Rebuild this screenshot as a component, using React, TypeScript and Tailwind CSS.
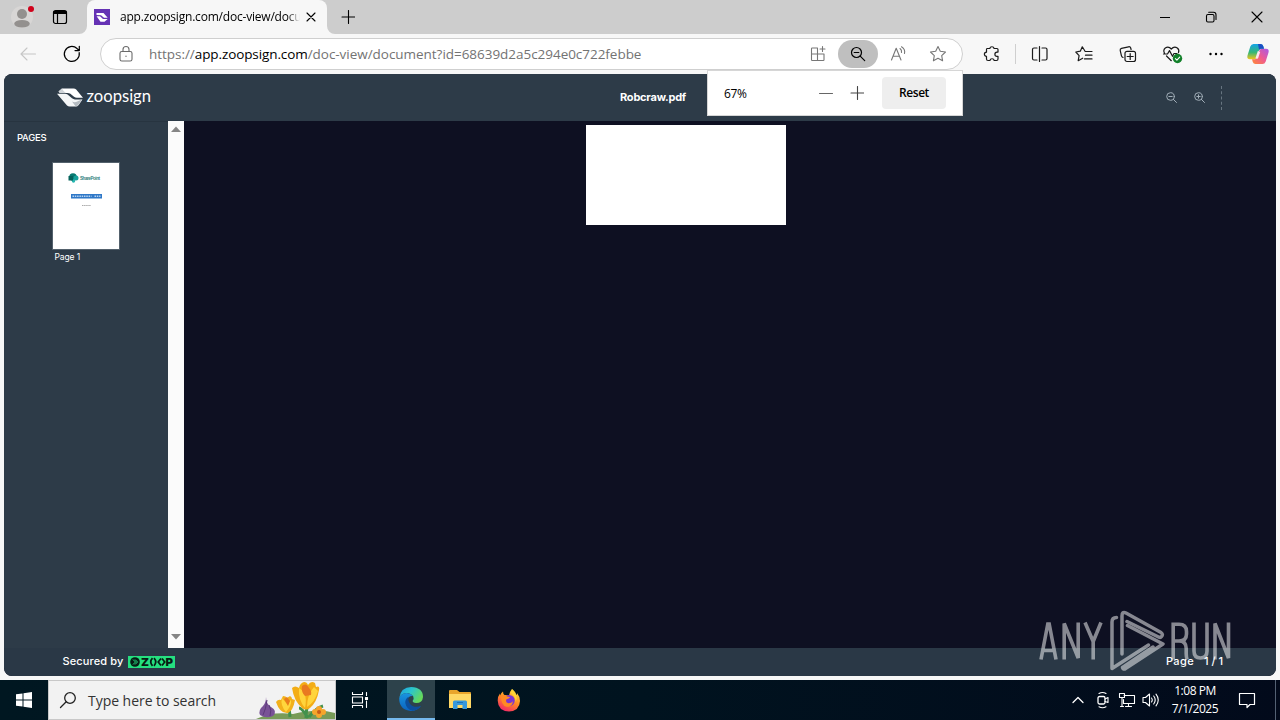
import type { ReactNode } from "react";

interface IconProps {
  w?: number;
  h?: number;
  className?: string;
  children: ReactNode;
}

function Icon({ w = 20, h = 20, className = "", children }: IconProps) {
  return (
    <svg
      width={w}
      height={h}
      viewBox={`0 0 ${w} ${h}`}
      fill="none"
      stroke="currentColor"
      strokeWidth="1.1"
      strokeLinecap="round"
      strokeLinejoin="round"
      className={`shrink-0 ${className}`}
    >
      {children}
    </svg>
  );
}

function ToolButton({ children, className = "w-11" }: { children: ReactNode; className?: string }) {
  return (
    <button className={`flex h-8 shrink-0 items-center justify-center ${className}`}>
      {children}
    </button>
  );
}

function TabStrip() {
  return (
    <div className="flex h-[34px] bg-[#cdcdcd]">
      <div className="flex w-[87px] shrink-0 items-center">
        <Icon w={28} h={28} className="ml-2">
          <circle cx="14" cy="14" r="11" fill="#d8d6d5" stroke="none" />
          <circle cx="14" cy="11" r="5" fill="#93908e" stroke="none" />
          <ellipse cx="14" cy="20.8" rx="7.8" ry="3.8" fill="#93908e" stroke="none" />
          <circle cx="23" cy="6" r="3" fill="#d0021b" stroke="none" />
        </Icon>
        <Icon className="ml-[14px] text-black">
          <rect x="3.5" y="3.5" width="13" height="13" rx="2" strokeWidth="1.2" />
          <path d="M4 4.5h12v1.8H4zM7.5 7v9" strokeWidth="1.2" fill="currentColor" />
        </Icon>
      </div>
      <div className="relative flex w-60 shrink-0 items-center rounded-t-lg bg-[#f7f7f7]">
        <svg className="absolute bottom-0 -left-2" width="8" height="8">
          <path d="M8 0v8H0a8 8 0 0 0 8-8" fill="#f7f7f7" />
        </svg>
        <svg className="absolute -right-2 bottom-0" width="8" height="8">
          <path d="M0 0v8h8a8 8 0 0 1-8-8" fill="#f7f7f7" />
        </svg>
        <Icon w={16} h={16} className="ml-[7px]">
          <rect width="16" height="16" fill="#6532b4" stroke="none" />
          <path d="M2.5 4h7l4.2 4.700H10L7 6.300 2.500 6z" fill="#fff" stroke="none" />
          <path d="M2.600 7.300H6l3 2.600h4.700L10.500 12.700H6.500z" fill="#fff" stroke="none" />
        </Icon>
        <span className="ml-[10px] w-[180px] bg-gradient-to-r from-black from-93% to-transparent bg-clip-text font-['Open_Sans',sans-serif] text-[12px] tracking-[-0.2px] whitespace-nowrap text-transparent">
          app.zoopsign.com/doc-view/docu
        </span>
        <Icon w={10} h={10} className="ml-[6px] text-black">
          <path d="M1 1l8 8M9 1L1 9" />
        </Icon>
      </div>
      <Icon w={14} h={14} className="mt-[10px] ml-[14px] text-black">
        <path d="M7.500.5v13M1 7h13" />
      </Icon>
      <div className="ml-auto flex">
        <div className="flex w-[46px] items-center justify-center">
          <Icon w={10} h={10} className="text-black">
            <path d="M0 5.5h10" />
          </Icon>
        </div>
        <div className="flex w-[46px] items-center justify-center">
          <Icon w={12} h={12} className="text-black">
            <rect x="1.500" y="3.500" width="7.500" height="7.500" rx="1.400" />
            <path d="M3.700 1.300h4.800a2.500 2.500 0 0 1 2.500 2.500v4.700" />
          </Icon>
        </div>
        <div className="flex w-[46px] items-center justify-center">
          <Icon w={12} h={12} className="text-black">
            <path d="M1 1l10 10M11 1L1 11" />
          </Icon>
        </div>
      </div>
    </div>
  );
}

function AddressBar() {
  return (
    <div className="ml-[6px] flex h-8 w-[863px] shrink-0 items-center rounded-full border border-[#cfcfcf] bg-white">
      <Icon className="ml-[15px] text-[#6b6b6b]">
        <rect x="4" y="7.5" width="12" height="9.5" rx="1.8" />
        <path d="M7 7.5V5.5a3 3 0 0 1 6 0v2" />
        <circle cx="10" cy="12.2" r=".7" fill="currentColor" stroke="none" />
      </Icon>
      <span className="ml-[13px] font-['Open_Sans',sans-serif] text-[13.5px] tracking-[-0.035px] whitespace-nowrap text-[#737373]">
        https://<span className="tracking-[-0.1px] text-black">app.zoopsign.com</span>
        /doc-view/document?id=68639d2a5c294e0c722febbe
      </span>
      <div className="mr-[4px] ml-auto flex items-center">
        <ToolButton className="w-10">
          <Icon className="text-[#777]">
            <path d="M9.500 4H4.200Q3.500 4 3.500 4.700V15.800q0 .7.7.7H15.300q.7 0 .7-.7V10H3.500M9.500 4v12.500M14.500 2.500v5M12 5h5" />
          </Icon>
        </ToolButton>
        <button className="flex h-7 w-10 items-center justify-center rounded-full bg-[#bfbfbf]">
          <Icon className="text-black">
            <circle cx="8.500" cy="8.500" r="5" strokeWidth="1.200" />
            <path d="M6.200 8.500h4.600M12.200 12.200l4.500 4.500" strokeWidth="1.200" />
          </Icon>
        </button>
        <ToolButton className="w-10">
          <Icon className="text-[#777]">
            <path d="M3.500 16L8.200 4.300 13 16M5 12.300h6.400M12 4.500q2 1.500 1.500 4M13.500 2.800q4 2.400 3 6.700" />
          </Icon>
        </ToolButton>
        <ToolButton className="w-10">
          <Icon className="text-[#777]">
            <path d="M10 2.500l2.300 4.800 5.200.7-3.800 3.600.9 5.200-4.600-2.500-4.600 2.500.9-5.200L2.500 8l5.200-.7z" />
          </Icon>
        </ToolButton>
      </div>
    </div>
  );
}

function Copilot() {
  return (
    <svg width="24" height="22" viewBox="0 0 24 22" className="shrink-0">
      <defs>
        <linearGradient id="cpA" x1="0" y1="0" x2="0" y2="1">
          <stop offset="0" stopColor="#14a4e8" />
          <stop offset=".55" stopColor="#35b777" />
          <stop offset="1" stopColor="#f3c51b" />
        </linearGradient>
        <linearGradient id="cpB" x1="1" y1="0" x2="0" y2="1">
          <stop offset="0" stopColor="#a859e8" />
          <stop offset=".5" stopColor="#ef5a91" />
          <stop offset="1" stopColor="#ff8a32" />
        </linearGradient>
      </defs>
      <path d="M7.5 1h7q2 0 2.7 2l.8 2.8h-3q-1.6 0-2.2 2l-2 6.5q-.7 2-2.8 2H4Q.5 16.300 1.500 12.500L4.300 3.500Q5.200 1 7.500 1z" fill="url(#cpA)" />
      <path d="M16.500 21h-7q-2 0-2.700-2L6 16.300h3q1.700 0 2.300-2l2-6.500q.6-2 2.700-2H20q3.500 0 2.500 3.800l-2.800 8.900q-.9 2.500-3.200 2.500z" fill="url(#cpB)" />
      <path d="M12 1h2.500q2 0 2.700 2l.8 2.800h-3q-1.200 0-1.900 1.200z" fill="#1b4fc4" />
      <path d="M13 8.500l-2.300 6.800" stroke="#fbe7ef" strokeWidth="2.500" />
    </svg>
  );
}

function Toolbar() {
  return (
    <div className="flex h-10 items-center bg-[#f7f7f7] text-[#1a1a1a]">
      <ToolButton className="ml-[6px] w-11 text-[#c6c6c6]">
        <Icon>
          <path d="M17.500 10H3M9 4l-6 6 6 6" />
        </Icon>
      </ToolButton>
      <ToolButton>
        <Icon className="text-black">
          <path d="M17.200 8.600A7.500 7.500 0 1 1 15 4.500L17.300 6.600M17.300 2.300v4.300H13" strokeWidth="1.200" />
        </Icon>
      </ToolButton>
      <AddressBar />
      <ToolButton className="ml-[7px] w-11">
        <Icon>
          <path
            d="M5 4.500h2.800a2.200 2.200 0 0 1 4.300 0H15q1 0 1 1v2.600h-1a2.100 2.100 0 0 0 0 4.200h1V15q0 1.500-1.500 1.500h-2.300a2.200 2.200 0 0 0-4.300 0H6q-1.500 0-1.500-1.500v-2.600a2.100 2.100 0 0 1 0-4.200V5.500q0-1 .5-1z"
            strokeWidth="1.200"
          />
        </Icon>
      </ToolButton>
      <div className="mr-[2px] ml-[1px] h-5 w-px bg-[#cfcfcf]" />
      <ToolButton>
        <Icon>
          <path d="M7 4H4Q2.500 4 2.500 5.500v9Q2.500 16 4 16h3M12 4h3.500Q17 4 17 5.500v9q0 1.500-1.500 1.500H12M9.500 2.500v15" strokeWidth="1.200" />
        </Icon>
      </ToolButton>
      <ToolButton>
        <Icon>
          <path d="M12.200 7.500h-1L8.300 2.800 6.300 7.200 1.800 8l3.300 3.600-.9 5.100 4.500-2.500M12.200 7.500H18M11.500 11.200H18M10.500 14.900H18" strokeWidth="1.200" />
        </Icon>
      </ToolButton>
      <ToolButton>
        <Icon>
          <path d="M5 13.500q-1.200-.4-1.600-1.900L2.200 6.300q-.3-1.600 1.300-2l7-1.500q1.700-.4 2.200 1.200l.4 1.500" strokeWidth="1.200" />
          <rect x="7" y="7.300" width="10.500" height="10.200" rx="2" strokeWidth="1.200" />
          <path d="M12.200 9.500v6M9.200 12.500h6" strokeWidth="1.200" />
        </Icon>
      </ToolButton>
      <ToolButton>
        <Icon w={22} h={20}>
          <path d="M3.500 9.300Q1.800 5.800 4.300 3.900 7.700 1.900 10.300 5 13 1.900 16.300 3.900 18.600 5.600 17.500 8.600M5.500 12l4.800 4.700M2.500 10h4L8.500 6.600l3 5.700L13 9.500h3" strokeWidth="1.200" />
          <circle cx="16.500" cy="14.500" r="4.700" fill="#12802a" stroke="none" />
          <path d="M14.400 14.700l1.500 1.500 2.800-3" stroke="#fff" />
        </Icon>
      </ToolButton>
      <ToolButton>
        <Icon>
          <g fill="black" stroke="none">
            <circle cx="4.500" cy="10" r="1.200" />
            <circle cx="10" cy="10" r="1.200" />
            <circle cx="15.500" cy="10" r="1.200" />
          </g>
        </Icon>
      </ToolButton>
      <ToolButton className="w-10">
        <Copilot />
      </ToolButton>
    </div>
  );
}

function ZoomPopover() {
  return (
    <div className="absolute top-[70px] left-[707px] flex h-[46px] w-64 items-center border border-[#d6d6d6] bg-white font-['Open_Sans',sans-serif] text-[12px] text-black">
      <span className="mt-px ml-4 w-[95px] tracking-[-0.4px]">67%</span>
      <Icon w={14} h={14} className="text-[#666]">
        <path d="M.5 7.500h13" />
      </Icon>
      <Icon w={14} h={14} className="ml-[17px] text-[#444]">
        <path d="M1 7h13M7.500.5v13" />
      </Icon>
      <button className="ml-[18px] h-8 w-16 rounded-sm bg-[#eee] font-semibold tracking-[-0.45px]">
        Reset
      </button>
    </div>
  );
}

function PageThumbnail() {
  return (
    <svg width="66" height="86" viewBox="0 0 66 86" className="bg-white">
      <circle cx="20" cy="14" r="3.800" fill="#087a72" />
      <circle cx="23" cy="15" r="2.500" fill="#18a19c" />
      <circle cx="20.500" cy="18" r="1.700" fill="#27b6b0" />
      <rect x="15.500" y="13" width="4.500" height="4.500" fill="#05635c" />
      <text x="27" y="17" fontSize="4.500" fontWeight="700" fill="#33817f" textLength="20" fontFamily="Liberation Sans, sans-serif">
        SharePoint
      </text>
      <rect x="18" y="31" width="31" height="4.500" fill="#2f78c8" />
      <path d="M19.500 33.300h19M41.500 33.300h6" stroke="#b9d4f0" strokeWidth="1.400" strokeDasharray="1.500 .8" />
      <path d="M29 42.500h9" stroke="#aaa" strokeWidth="1" strokeDasharray="1.500 .6" />
    </svg>
  );
}

function DocHeader() {
  return (
    <header className="flex h-[47px] shrink-0 items-center bg-[#2d3b48] text-white">
      <svg width="98" height="28" viewBox="0 0 98 28" className="ml-[53px]">
        <path d="M5 4.500h11.500q1.700 0 2.700 1L26 13.700H20q-1.700 0-3-1l-3.600-2.900Q12.200 9 10.500 9H3L1.500 7.500z" fill="#fff" />
        <path d="M0 9.700h8q1.500 0 2.600.9l4.400 3.700q1.300 1.100 3 1.100h7.500l-3.800 5.600q-1.200 1.500-3 1.500h-6q-1.600 0-2.700-1z" fill="#f4f6f7" />
        <path d="M15 17.500q2 1 4 .5l6-2.500-3.800 5.500q-1 1.400-2.500 1.500z" fill="#b4bbc1" />
        <path d="M1.500 7.500L5 4.500q1 2.500 4 4.500H3z" fill="#cfd4d8" />
        <text x="29.500" y="17.500" fontFamily="Lato, sans-serif" fontSize="17.500" fill="#fff" textLength="64.500" lengthAdjust="spacingAndGlyphs">
          zoopsign
        </text>
      </svg>
      <h1 className="-mt-px ml-[465px] w-[67px] font-['Inter',sans-serif] text-[11px] font-bold tracking-[-0.22px] whitespace-nowrap">
        Robcraw.pdf
      </h1>
      <div className="mr-[53px] ml-auto flex items-center text-[#a3afb9]">
        <Icon w={12} h={12}>
          <circle cx="4.500" cy="4.500" r="3.800" strokeWidth="1" />
          <path d="M2.800 4.500h3.400M7.300 7.300l3.200 3.200" strokeWidth="1" />
        </Icon>
        <Icon w={12} h={12} className="ml-4">
          <circle cx="4.500" cy="4.500" r="3.800" strokeWidth="1" />
          <path d="M2.800 4.500h3.400M4.500 2.800v3.400M7.300 7.300l3.200 3.200" strokeWidth="1" />
        </Icon>
        <div className="mr-px ml-[15px] h-6 border-l border-dashed border-[#677580]" />
      </div>
    </header>
  );
}

function PagesSidebar() {
  return (
    <aside className="flex w-[180px] shrink-0 bg-[#2d3b48]">
      <div className="w-[164px] border-t border-[#273440] font-['Inter',sans-serif] text-white">
        <h2 className="mt-[9px] ml-[13px] text-[9.500px] leading-[14px] font-medium tracking-[-0.25px]">PAGES</h2>
        <div className="mt-[17px] ml-[48px] w-fit border border-[#53616c]">
          <PageThumbnail />
        </div>
        <p className="mt-[1px] ml-[50.500px] text-[8.500px] leading-3 tracking-[-0.1px]">Page 1</p>
      </div>
      <div className="flex w-4 flex-col items-center justify-between bg-[#fbfbfb] py-[5px] pr-px">
        <svg width="10" height="6">
          <path d="M0 6l5-5.500L10 6z" fill="#858585" />
        </svg>
        <svg width="10" height="6" className="mb-[3px]">
          <path d="M0 0l5 5.500L10 0z" fill="#858585" />
        </svg>
      </div>
    </aside>
  );
}

function DocFooter() {
  return (
    <footer className="flex h-7 shrink-0 items-center bg-[#2a3846] font-['Inter',sans-serif] text-[11px] font-medium text-white">
      <span className="-mt-0.5 ml-[58.5px] w-[65.5px] tracking-[0.13px] whitespace-nowrap">Secured by</span>
      <svg width="47" height="12" viewBox="0 0 47 12">
        <rect width="47" height="12" fill="#25df7f" />
        <circle cx="7" cy="6" r="4.800" fill="#071c15" />
        <path d="M5 3.500L7.500 6 5 8.500M7 3.500L9.500 6 7 8.500" stroke="#25df7f" fill="none" />
        <text x="13" y="10" fontFamily="Inter, sans-serif" fontSize="11" fontWeight="900" fill="#071c15" textLength="8" lengthAdjust="spacingAndGlyphs">
          Z
        </text>
        <path d="M24.500 2.200Q21 6 24.500 9.800M26 2.200Q29.500 6 26 9.800M33 2.500L30.200 6 33 9.500M34 2.500L36.700 6 34 9.500" stroke="#071c15" strokeWidth="1.700" fill="none" />
        <text x="37.500" y="10" fontFamily="Inter, sans-serif" fontSize="11" fontWeight="900" fill="#071c15" textLength="7.500" lengthAdjust="spacingAndGlyphs">
          P
        </text>
      </svg>
      <div className="-mt-0.5 mr-[53px] ml-auto flex">
        <span className="w-[38px] tracking-[0.4px]">Page</span>
        <span className="whitespace-nowrap">1 / 1</span>
      </div>
    </footer>
  );
}

function Watermark() {
  return (
    <svg className="absolute top-[606px] left-[1036px] opacity-50" width="200" height="70" viewBox="0 0 200 70">
      <g fill="none" stroke="#fff" strokeWidth="3.600" strokeLinejoin="miter">
        <path d="M5 53.500L11.800 18h1.400L20 53.500M7.500 44.500h10" />
        <path d="M28.200 53.500V17.500L42.200 52V16.500" />
        <path d="M49 16.500L57.200 35.500 65 16.500M57.200 35.500v18" />
        <path d="M137.200 53.500V18.200h5.800q7.500 0 7.500 7.300v2.500q0 7-7.500 7h-5.800M143 35q7.200 0 7.200 7.500v5q0 4 1 6" />
        <path d="M158 16.500V45q0 7 6.500 7t6.500-7V16.500" />
        <path d="M179 53.500V17.500L192.500 52V16.500" />
      </g>
      <g fill="none" stroke="#fff" strokeWidth="3.500" strokeLinejoin="round" strokeLinecap="round">
        <path d="M80.500 11.500q-4.500 0-4.500 4.500V62.500L112.500 39" />
        <path d="M86 48V10q0-5 4-3L125 26.500q2.500 2 .5 4-1 1.500-3 .5L91 15.500" />
        <path d="M91.500 19.500L127 38 89.500 62.500q-2 1.500-3-1L117 41" />
      </g>
    </svg>
  );
}

function Flowers() {
  return (
    <svg width="82" height="38" viewBox="0 0 82 38" className="ml-auto self-end">
      <path d="M3 38Q20 30 40 33q25-6 42-1v6z" fill="#789b58" />
      <path d="M37 36q-1-9-1-15M53 37q0-10 3-16M55 37q-6-10-9-10M56 36q7-9 14-11" stroke="#43914c" strokeWidth="3" fill="none" />
      <path d="M13 16q0 7 5 10 7 4 2 9-7 3-13-1-2-5 3-9 3-3 3-9z" fill="#795296" />
      <path d="M14 19q-1 9-4 15M16 24q3 5 1 11" stroke="#5c3a79" fill="none" />
      <path d="M23 21q2-3 5-2l2-4q3 0 4 2l3-2q2 1 2 3l3 1q-2 11-7 13-8 1-12-11z" fill="#f2b01b" />
      <path d="M29 17q-2 7 4 14 6-7 5-12l-4 4z" fill="#ffd63d" />
      <path d="M31 18l3-2 3 4-2 5z" fill="#e97d1c" />
      <path d="M39 7q3-3 7 0 1-5 5-6 3 0 4 3 3-5 7-2l1 4q4-2 3 3-2 12-9 18-4 3-8 0-8-7-10-20z" fill="#f3ad16" />
      <path d="M46 7q-1 12 6 20 2-9-1-16zM61 6q-7 8-7 20 8-5 11-16z" fill="#ffd43b" />
      <path d="M49 5q4-4 7 2 3 3 2 7l-6 1q-4-4-3-10z" fill="#e97921" />
      <g fill="#f6a52c">
        <circle cx="62" cy="31" r="3" />
        <circle cx="66" cy="28" r="3" />
        <circle cx="70" cy="31" r="3" />
        <circle cx="66" cy="34" r="3" />
      </g>
      <circle cx="66" cy="31" r="2" fill="#c95d19" />
    </svg>
  );
}

function EdgeLogo() {
  return (
    <svg width="24" height="24" viewBox="0 0 24 24">
      <defs>
        <linearGradient id="edTop" x1="0" y1="0" x2="1" y2=".5">
          <stop offset="0" stopColor="#1c9de4" />
          <stop offset=".5" stopColor="#2bc5cc" />
          <stop offset="1" stopColor="#65d95b" />
        </linearGradient>
        <linearGradient id="edLeft" x1="0" y1="0" x2="0" y2="1">
          <stop offset="0" stopColor="#1995e0" />
          <stop offset="1" stopColor="#0b62be" />
        </linearGradient>
      </defs>
      <path d="M.2 11Q2 0 12.200 0 24 .5 24 10q-.5 6-6.800 6-4-.3-3.500-2.200 1.600-1.600.6-4.200Q12 6 7.500 6 2 6.300.2 11z" fill="url(#edTop)" />
      <path d="M.2 11Q2 6.300 7.500 6q4.200.2 6.400 3-4.500-.5-5.500 4-.2 6 6 8.300 3.700.5 7.500-2.300Q18 24 12 24 0 23 .2 11z" fill="url(#edLeft)" />
      <path d="M9.500 9.800Q6 12 6.300 16q1.200 6.200 7.200 7.800 5-.2 8.600-5-4.100 1.800-8 .5Q8.500 16.500 9.500 9.800z" fill="#0d4e9b" />
    </svg>
  );
}

function FirefoxLogo() {
  return (
    <svg width="24" height="24" viewBox="0 0 24 24">
      <defs>
        <linearGradient id="ffA" x1=".8" y1="0" x2=".3" y2="1">
          <stop offset="0" stopColor="#ffe33e" />
          <stop offset=".5" stopColor="#ff8b24" />
          <stop offset="1" stopColor="#f32668" />
        </linearGradient>
      </defs>
      <path d="M15 1q4 3 4.200 6 1-.5.800-2 3 3.500 3 8-.5 10-11 10.500Q1 23 .7 12.500.8 8 3 5.500v2Q4 5 6 3.500 6 6 7.500 7l4.500.5Q13 3 15 1z" fill="url(#ffA)" />
      <circle cx="12.200" cy="12.500" r="5.500" fill="#7a35d3" />
      <path d="M4 8q4-2 6 .5l3 .5q-1 2-3.500 2.300-1.500 3 2 4 3 0 4.500-2-1 6-6.500 5.500Q4 17.500 4 8z" fill="#ff8a23" />
      <path d="M14 5q5 4 4.500 9 2-3 .8-7L15 1z" fill="#ffd536" />
    </svg>
  );
}

function Taskbar() {
  return (
    <div className="flex h-10 bg-gradient-to-r from-[#001721] via-[#00131f] to-[#020a1b] text-white">
      <div className="flex w-12 items-center justify-center">
        <svg width="16" height="16" viewBox="0 0 16 16" fill="#fff">
          <path d="M0 2.300L6.500 1.400V7.500H0zM7.500 1.200L16 0v7.500H7.500zM0 8.500h6.500v6.100L0 13.700zM7.500 8.500H16V16l-8.500-1.200z" />
        </svg>
      </div>
      <div className="flex w-72 items-center border border-[#c8c8c8] bg-[#f2f2f2] text-[#333]">
        <Icon w={18} h={18} className="ml-[10px] text-[#222]">
          <circle cx="11" cy="7" r="5.300" strokeWidth="1.300" />
          <path d="M7.200 10.800L1.500 16.500" strokeWidth="1.300" />
        </Icon>
        <span className="ml-[11px] font-['Open_Sans',sans-serif] text-[14px] tracking-[-0.04px] whitespace-nowrap">
          Type here to search
        </span>
        <Flowers />
      </div>
      <div className="flex w-12 items-center justify-center">
        <Icon w={18} h={16}>
          <path d="M1.500.5v2h10v-2M1.500 15.500v-2h10v2M1.500 5h10v6h-10zM15.500.5v3M15.500 9v6.500" />
          <path d="M14.500 5.500h2v2h-2z" fill="#fff" />
        </Icon>
      </div>
      <div className="ml-[3px] flex w-12 items-center justify-center border-b-2 border-[#76b9ed] bg-[#2d424b]">
        <EdgeLogo />
      </div>
      <div className="flex w-12 items-center justify-center pl-[2px]">
        <svg width="22" height="20" viewBox="0 0 22 20">
          <path d="M0 1q0-1 1-1h7l2.500 2H21q1 0 1 1v15H0z" fill="#e9a52c" />
          <path d="M0 4h22v14H0z" fill="#ffd865" />
          <path d="M4 19v-7q0-1.500 1.500-1.500h11Q18 10.500 18 12v7h-4.500v-4h-5v4z" fill="#3597dc" />
          <path d="M8 12.500h6" stroke="#1a70b8" />
        </svg>
      </div>
      <div className="flex w-[52px] items-center justify-center">
        <FirefoxLogo />
      </div>
      <div className="ml-auto flex items-center">
        <Icon w={12} h={8}>
          <path d="M1 6.500l5-5 5 5" strokeWidth="1.300" />
        </Icon>
        <Icon w={14} h={18} className="ml-[12px]">
          <rect x="2" y="5.500" width="7" height="7.500" rx="1.500" strokeWidth="1.300" />
          <path d="M9 8l3-1.500v5L9 10.500M3 2.500q3.500-2 7 0M3 15.800q3.500 2 7 0" />
        </Icon>
        <Icon w={18} h={16} className="ml-[8px]">
          <path d="M6 3.500h10.500v8H5.500v-4M10.500 11.500v3M7.500 14.500h6M1.500 1.500h5v4h-5zM4 5.500v9M2.500 14.500h3" />
        </Icon>
        <Icon w={18} h={16} className="ml-[6px]">
          <path d="M1 5.500h2.500L7.500 2v12L3.500 10.500H1zM9.500 6q1.500 2 0 4M11.700 4q3 4 0 8M14 2.200q4.500 5.800 0 11.600" />
        </Icon>
        <div className="ml-[5px] w-[60px] text-center font-['Open_Sans',sans-serif] text-[12px] leading-[18px] tracking-[-0.45px] whitespace-nowrap">
          <div>1:08 PM</div>
          <div>7/1/2025</div>
        </div>
        <Icon w={18} h={18} className="ml-[13px]">
          <path d="M1.500 2.500h15v11H12l-3 3v-3H1.500z" strokeWidth="1.200" />
        </Icon>
        <div className="mr-1 ml-[19px] h-10 w-px bg-[#536173]" />
      </div>
    </div>
  );
}

export default function App() {
  return (
    <div className="relative flex h-[720px] w-[1280px] flex-col overflow-hidden bg-[#f7f7f7]">
      <TabStrip />
      <Toolbar />
      <div className="mx-1 mb-1 flex h-[602px] flex-col overflow-hidden rounded-lg bg-[#0e1022]">
        <DocHeader />
        <div className="flex flex-1">
          <PagesSidebar />
          <main className="flex flex-1 items-start">
            <div className="mt-1 ml-[402px] h-[100px] w-[200px] bg-white" />
          </main>
        </div>
        <DocFooter />
      </div>
      <Taskbar />
      <ZoomPopover />
      <Watermark />
    </div>
  );
}
